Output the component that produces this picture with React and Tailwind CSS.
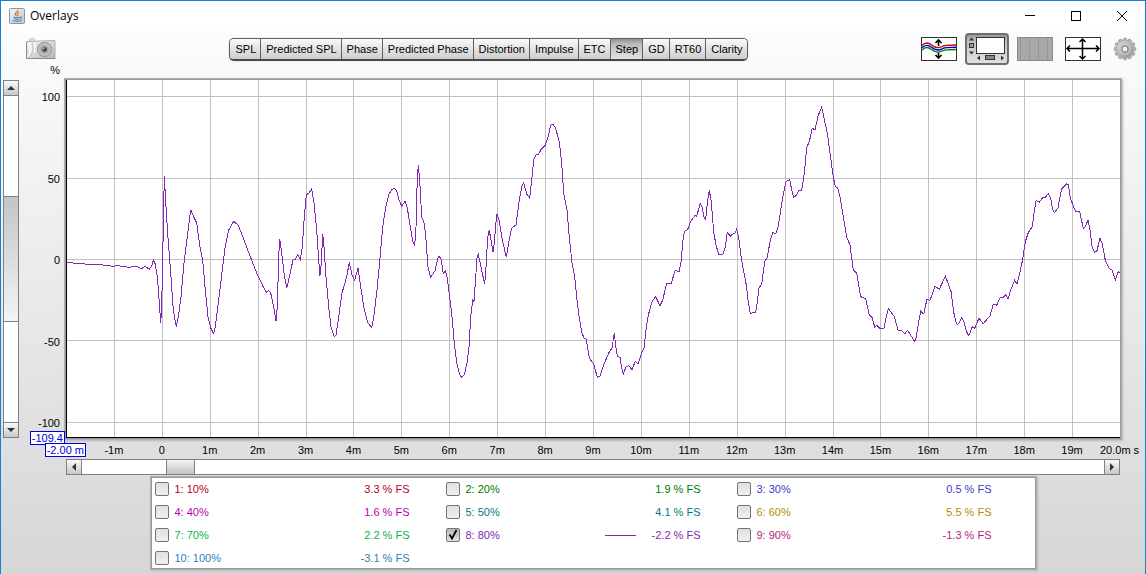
import React from "react";

const MODES = ["SPL", "Predicted SPL", "Phase", "Predicted Phase", "Distortion", "Impulse", "ETC", "Step", "GD", "RT60", "Clarity"];

const TRACES = [
  { name: "1: 10%", value: "3.3 % FS", color: "text-[#b4001e]" },
  { name: "2: 20%", value: "1.9 % FS", color: "text-[#007a00]" },
  { name: "3: 30%", value: "0.5 % FS", color: "text-[#3c3cc8]" },
  { name: "4: 40%", value: "1.6 % FS", color: "text-[#b400b4]" },
  { name: "5: 50%", value: "4.1 % FS", color: "text-[#007a80]" },
  { name: "6: 60%", value: "5.5 % FS", color: "text-[#b48c00]" },
  { name: "7: 70%", value: "2.2 % FS", color: "text-[#00b450]" },
  { name: "8: 80%", value: "-2.2 % FS", color: "text-[#8228b4]", shown: true },
  { name: "9: 90%", value: "-1.3 % FS", color: "text-[#b41e82]" },
  { name: "10: 100%", value: "-3.1 % FS", color: "text-[#2882be]" },
];

const X_TICKS = ["-1m", "0", "1m", "2m", "3m", "4m", "5m", "6m", "7m", "8m", "9m", "10m", "11m", "12m", "13m", "14m", "15m", "16m", "17m", "18m", "19m"];
const GRID_X = [114, 162, 210, 258, 306, 353, 401, 449, 497, 545, 593, 641, 689, 737, 785, 833, 880, 928, 976, 1024, 1072];
const GRID_Y = [96, 178, 259, 340, 422];

const STEP_RESPONSE =
  "67,262.5 85,264 101,264.7 113,266.3 118,265.7 129,267.3 136.7,266.3 141.7,268.7 145,266.3 149.3,269.3 151.7,266 153.3,260 155.3,264 157.7,280 159.3,303 160.7,322.5 161.7,307 163.3,227 164.3,176 166,207 168,238 170.7,273 173.3,310 176.3,326.7 178.3,317 181,297 184,263 187.3,237 189.7,217 191,210 193.3,216 196.7,223 199.7,245 202.7,260 205.3,290 208,317 210.7,328 213.7,333.7 215.3,327 218.3,303 221.7,275 225,248 228.7,230 233.7,221.3 238.3,225.3 243.3,238 250,256 256.7,273 263.3,287 266.7,292.7 268.7,290.3 270.7,293 273.3,305 276,320.7 277.3,307 278.7,257 279.7,238.7 281.7,253 284.3,275 286.7,288.3 289.3,277 293,260 295.3,259.3 297.7,254.7 300.3,259.3 302.3,247 304.3,217 306.3,195 309.3,192.7 311.7,188.7 314,203 316.7,230 318.7,260 320,275.7 321.3,263 322.7,234 324,247 326,277 328.7,307 331,327 334.3,336.7 336,335 338.7,317 342,293 346.7,277 349.3,262.3 352,275 354.7,280.3 358,268 360.7,287 364,308 367.7,322.7 371.7,327.3 373.7,318 377,290 380,258 382.7,227 385.7,207 389,194 392,189.3 394.7,188.5 396.7,190.7 399,200 401.7,206 405,201.3 407.3,208 410,225 412.7,241.7 414.7,245.3 416,227 417.3,177 418.3,165.3 419.7,180 421.7,217 424.3,223.3 426,240 428,267 430.7,277.3 435,270.7 438.3,256.7 440.7,257.3 443.3,273.3 445.3,270.7 447.3,278 449.7,297 452,317 454.3,343 456.7,363 459,372 461,377.3 464.3,375 467,363 469,347 470.7,317 472.7,300.3 474,301.7 475.3,283 477,258 478.3,254.7 480,262 482.7,275 484.7,284.3 486,267 487.7,237 489.3,230.3 491.3,242 493,252.3 494.3,243 496.7,213.7 499,220 502.3,240 506.3,257.3 508.7,243 511.7,228 516,225 519.3,200 521.7,187 523.7,182.7 526.7,194 529.7,198.3 531.7,180 533.7,160 536,154.7 538.3,154.7 541.3,149 545.3,145.3 548,137 550.7,125.3 552.7,124.3 555.3,127.3 559.3,141.7 561.7,163 563.7,193 567,210 569.3,237 572,263 574.7,277 577,300 579.3,318 581.7,332 584,338 586.3,339.3 589.3,358 593.7,364 597.3,377.3 600,376 604,364.3 608.7,353 612,348 614.3,333.3 616,348 617.5,356.7 620,357.3 621.7,368 623.3,374.3 626,366.7 628.7,365.7 632,369.7 635.3,361.3 638,364 641.7,353 644,348 646,330 648.3,315 652,301.7 655.7,296.7 660,305.7 662.7,300 666.7,283.3 671.3,283.3 675,270.7 679.3,271.3 681.3,260 682.7,242 684.3,231.7 687.7,229.3 690.7,221.3 694.7,215.7 696.7,216.3 700.3,203.3 702,207 704,217 705.7,219.3 707.3,203 709.3,190.3 711.3,202 713.7,232 716,245 718.7,254.3 723.3,254 725.7,245 727.3,232.3 730.3,236.3 732.7,234 734.7,233.7 736.7,229.3 738.7,238 741.3,258 744,273 746.3,285 748.3,302 750.3,313.3 755.3,312.3 756.7,307 759,288 761.7,284 764.7,261.7 767.3,257.3 770,242 772.7,232.3 775.7,234 778,227 780.3,213 782.7,197 786,181.7 789.7,179.7 791.7,190 793.7,197.3 795.7,196 798.7,190.7 801.7,190 803.3,180 804.3,173 806.7,148 809.7,140 812.3,128 815,130 818,116 821.7,107.3 824,118 827.3,133 830,153 833.3,177 835.3,186.7 837.7,187.7 840,197 843.3,217 846.7,237 850,245 853.3,270 856.7,273.3 860.7,296.7 865.7,298.7 869.3,315 872.3,318 874.7,327 876.7,325.3 880,328.3 884,328 886.7,315 888.3,308.7 890.7,311.7 894.3,316.7 898.3,330.7 901.7,330.7 904.7,333.7 907.7,330.3 911,335.7 914.7,341.7 916.3,336.7 918.7,321.7 920.7,311.3 923.7,314 927,299 930,300.3 935,286.3 939.3,289.3 945.3,276.3 948,283 951.3,292.3 953.3,310 955.7,321.7 957.3,324.7 959,323 961.7,317.3 964,321.7 966,330 968.3,335.7 970,333 972.3,326.7 974.7,328.3 979,318.3 983.3,323.7 990,315.7 993.3,304.3 996.7,305.3 1000,297.7 1002.7,297.7 1005.7,294.7 1008,299.3 1010.7,290 1014.7,280.3 1017,284.3 1019.3,275 1022.7,259.3 1025.3,241.7 1028.3,232.7 1032.3,226.7 1034,213 1036,200.7 1039.3,202.3 1042.7,197.7 1045.7,197 1048.3,193.3 1050.7,198 1052.3,208 1054.3,212.7 1058,207.7 1060,197 1061.7,189 1066.7,183.7 1068.3,184.7 1070.3,198 1075.3,211 1079.7,212 1083.3,228.3 1085.3,226.7 1088,220 1089.7,228 1092.3,248 1094.7,252.3 1097,250.7 1100,238.3 1102,243 1105.3,260 1108.7,268 1112,270 1115.3,280.3 1118.3,271.7 1120,272.3";

function JavaIcon() {
  return (
    <svg width="16" height="16" viewBox="0 0 16 16" aria-hidden="true">
      <defs>
        <linearGradient id="cup" x1="0" y1="0" x2="1" y2="1">
          <stop offset="0" stopColor="#f4f6f8" />
          <stop offset="1" stopColor="#b9c6d3" />
        </linearGradient>
      </defs>
      <rect x="0.5" y="0.5" width="15" height="15" rx="1" fill="url(#cup)" stroke="#7f98ae" />
      <path d="M8.800 2c.6 1.600-2.800 2.400-2.500 4.100.1.9 1 1.300 1.100 2.100M10.300 4.500c-1.400.5-2.200 1.300-1.600 2.100.4.6.2 1-.3 1.500" fill="none" stroke="#e8761a" strokeWidth="1.200" />
      <path d="M4.500 9.200c1 .6 5.400.6 6.600 0M5.200 10.900c1.400.5 3.800.5 5 0M3.500 12.500c2 1 7.500 1 9-.2M11.300 9c2.200-.4 2 1.700-.3 2.200" fill="none" stroke="#4878a0" strokeWidth="1" />
    </svg>
  );
}

function CameraIcon() {
  return (
    <svg width="31" height="22" viewBox="0 0 31 22" aria-hidden="true">
      <defs>
        <linearGradient id="camBody" x1="0" y1="0" x2="1" y2="1">
          <stop offset="0" stopColor="#fafafa" />
          <stop offset="1" stopColor="#b5b5b5" />
        </linearGradient>
        <radialGradient id="lens">
          <stop offset="0" stopColor="#30303c" />
          <stop offset="0.25" stopColor="#50505a" />
          <stop offset="0.4" stopColor="#a2a2a2" />
          <stop offset="0.75" stopColor="#c8c8c8" />
          <stop offset="1" stopColor="#858585" />
        </radialGradient>
      </defs>
      <rect x="4.500" y="0.500" width="5" height="3" rx="1" fill="#e4e4e4" stroke="#b4b4b4" strokeWidth="0.700" />
      <path d="M1.500 3.500 L30 2.500 V20.500 H1.500Z" fill="url(#camBody)" stroke="#b0b0b0" />
      <path d="M1.500 4v16.500h29" fill="none" stroke="#888" />
      <path d="M3.500 5c3 4 3 10-1 14M9.500 5.500v9" fill="none" stroke="#fff" strokeWidth="1.500" />
      <path d="M7 5c2 4 2 9-3 14" fill="none" stroke="#bbb" />
      <circle cx="19.500" cy="11.500" r="7.500" fill="url(#lens)" />
      <circle cx="18.500" cy="10.500" r="1" fill="#b8b8d8" />
    </svg>
  );
}

function TracesIcon() {
  return (
    <svg width="36" height="24" viewBox="0 0 36 24" aria-hidden="true">
      <rect x="0.500" y="0.500" width="35" height="23" fill="#fff" stroke="#333" />
      <path d="M17.500 3v18M14.500 6l3-3 3 3M14.500 18l3 3 3-3" fill="none" stroke="#000" strokeWidth="1.600" />
      <path d="M11 9.500c3 2 6 4 10 2.500" fill="none" stroke="#fff" strokeWidth="6.500" />
      <g fill="none" strokeWidth="1.400">
        <path d="M1 8.500c3-3 6.500-3 9.500-.5s6 4 10.500 1.500c2-1.500 6-1.500 14-1.500" stroke="#c80000" />
        <path d="M1 10.800c3-3 6.500-3 9.500-.5s6 4 10.500 1.500c2-1.500 6-1.500 14-1.500" stroke="#0000c8" />
        <path d="M1 13c3-3 6.500-3 9.500-.5s6 4 10.500 1.500c2-1.500 6-1.500 14-1.500" stroke="#008000" />
      </g>
    </svg>
  );
}

function ScrollbarsIcon() {
  return (
    <svg width="38" height="24" viewBox="0 0 38 24" aria-hidden="true">
      <rect x="8.500" y="0.500" width="28" height="16" fill="#fff" stroke="#333" />
      <path d="M1 3.500h5L3.500 0.500zM1 14.500h5l-2.500 3zM12 18.500v5l-3-2.500zM33 18.500v5l3-2.500z" fill="#333" />
      <rect x="1.500" y="6.500" width="4" height="4" fill="#999" stroke="#333" />
      <rect x="17.500" y="18.500" width="9" height="4" fill="#888" stroke="#333" />
    </svg>
  );
}

function BandsIcon() {
  return (
    <svg width="36" height="24" viewBox="0 0 36 24" aria-hidden="true" shapeRendering="crispEdges">
      <rect x="0.500" y="0.500" width="35" height="23" fill="#a8a8a8" stroke="#8a8a8a" />
      <path d="M3.500 1v22M12.500 1v22M21.500 1v22M30.500 1v22" stroke="#969696" />
    </svg>
  );
}

function FitIcon() {
  return (
    <svg width="36" height="24" viewBox="0 0 36 24" aria-hidden="true">
      <rect x="0.500" y="0.500" width="35" height="23" fill="#fff" stroke="#333" />
      <path d="M2 11.500h32M17.500 2v20M14.500 5l3-3 3 3M14.500 19l3 3 3-3M5 8.500l-3 3 3 3M31 8.500l3 3-3 3" fill="none" stroke="#000" strokeWidth="1.500" />
    </svg>
  );
}

function GearIcon() {
  const teeth = [0, 30, 60, 90, 120, 150, 180, 210, 240, 270, 300, 330];
  return (
    <svg width="24" height="24" viewBox="0 0 24 24" aria-hidden="true">
      <defs>
        <linearGradient id="gear" x1="0" y1="0" x2="1" y2="1">
          <stop offset="0" stopColor="#dcdcdc" />
          <stop offset="1" stopColor="#909090" />
        </linearGradient>
      </defs>
      <g fill="#b8b8b8" stroke="#8c8c8c" strokeWidth="0.700">
        {teeth.map((a) => (
          <rect key={a} x="10.300" y="1.200" width="3.400" height="4" rx="1" transform={`rotate(${a} 12 12)`} />
        ))}
      </g>
      <circle cx="12" cy="12" r="8.700" fill="url(#gear)" stroke="#a4a4a4" strokeWidth="0.600" />
      <circle cx="12" cy="12" r="5.500" fill="none" stroke="#cacaca" strokeWidth="1.200" />
      <circle cx="12" cy="12" r="3" fill="#f0f0f0" stroke="#808080" />
    </svg>
  );
}

function Arrow({ d }) {
  return (
    <svg width="8" height="8" viewBox="0 0 8 8" aria-hidden="true">
      <path d={d} fill="#333" />
    </svg>
  );
}

const arrowButton = "flex size-4 shrink-0 items-center justify-center border border-[#808080] bg-linear-to-b from-[#fafafa] to-[#c8c8c8]";
const panelFrame = "shadow-[0_0_0_1px_#999,0_0_0_2px_#b0b0b0,1px_1px_2px_2px_#b8b8b8]";

function TitleBar() {
  return (
    <header className="flex h-[30px] items-center bg-white pl-2">
      <JavaIcon />
      <h1 className="ml-[5px] flex-1 font-['Open_Sans','Noto_Sans',sans-serif] text-[12px] text-black">Overlays</h1>
      <button aria-label="Minimize" className="flex h-full w-[46px] items-center justify-center">
        <svg width="10" height="10" viewBox="0 0 10 10"><path d="M0 4.500h10" stroke="#000" /></svg>
      </button>
      <button aria-label="Maximize" className="flex h-full w-[46px] items-center justify-center">
        <svg width="10" height="10" viewBox="0 0 10 10"><rect x="0.500" y="0.500" width="9" height="9" fill="none" stroke="#000" /></svg>
      </button>
      <button aria-label="Close" className="flex h-full w-[46px] items-center justify-center">
        <svg width="10" height="10" viewBox="0 0 10 10"><path d="M0 0l10 10M10 0L0 10" stroke="#000" /></svg>
      </button>
    </header>
  );
}

function Toolbar() {
  return (
    <div className="flex h-9 items-center pr-2 pl-6">
      <button aria-label="Capture image"><CameraIcon /></button>
      <div className="flex flex-1 justify-center">
        <div role="group" aria-label="Graph type" className="flex h-[23px] overflow-hidden rounded-[5px] border border-b-2 border-[#606060] border-b-[#484848] shadow-[0_0_1px_#808080]">
          {MODES.map((mode) => (
            <button
              key={mode}
              aria-pressed={mode === "Step"}
              className={
                mode === "Step"
                  ? "border-r border-[#606060] bg-linear-to-b from-[#909090] via-[#bcbcbc] via-25% to-[#e4e4e4] pt-px pr-1 pl-[5px] whitespace-nowrap last:border-r-0"
                  : "border-r border-[#606060] bg-linear-to-b from-[#fafafa] to-[#cdcdcd] pt-px pr-1 pl-[5px] whitespace-nowrap last:border-r-0"
              }
            >
              {mode}
            </button>
          ))}
        </div>
      </div>
      <div className="flex items-center gap-2">
        <button aria-label="Separate traces"><TracesIcon /></button>
        <button aria-label="Scrollbars" aria-pressed="true" className="flex h-8 w-11 items-center justify-center rounded-[4px] border-2 border-[#707070] bg-linear-to-b from-[#989898] via-[#c4c4c4] via-25% to-[#e0e0e0]">
          <ScrollbarsIcon />
        </button>
        <button aria-label="Frequency bands"><BandsIcon /></button>
        <button aria-label="Fit to data" className="ml-1"><FitIcon /></button>
        <button aria-label="Graph controls" className="ml-1"><GearIcon /></button>
      </div>
    </div>
  );
}

function Chart() {
  return (
    <svg className="absolute inset-0 size-full" viewBox="67 80 1053 357" preserveAspectRatio="none" role="img" aria-label="Step response, percent against time" shapeRendering="crispEdges">
      <g stroke="#c0c0c0" strokeWidth="1">
        {GRID_X.map((x) => <line key={x} x1={x + 0.5} x2={x + 0.5} y1="80" y2="437" vectorEffect="non-scaling-stroke" />)}
        {GRID_Y.map((y) => <line key={y} x1="67" x2="1120" y1={y + 0.5} y2={y + 0.5} vectorEffect="non-scaling-stroke" />)}
      </g>
      <polyline points={STEP_RESPONSE} fill="none" stroke="#8228b4" strokeWidth="1" vectorEffect="non-scaling-stroke" />
    </svg>
  );
}

function Legend() {
  return (
    <div className="mr-[25px] ml-[65px] flex justify-center">
      <section aria-label="Traces" className={`grid h-[90px] w-full max-w-[883px] grid-cols-3 content-start bg-white pr-[7px] pl-[3px] ${panelFrame}`}>
        {TRACES.map((t) => (
          <label key={t.name} className={`flex h-[23px] items-center pr-9 ${t.color}`}>
            <span className="relative mr-[6px] mb-[2px] flex">
              <input
                type="checkbox"
                defaultChecked={!!t.shown}
                className="peer size-[14px] appearance-none rounded-[2px] border border-[#70747c] bg-linear-to-b from-[#e0e0e0] to-[#f0f0f0] checked:from-[#b8b8b8] checked:to-[#e0e0e0]"
              />
              <svg className="pointer-events-none absolute top-0 left-0 hidden peer-checked:block" width="14" height="14" viewBox="0 0 14 14" aria-hidden="true">
                <path d="M3.500 6.500L6 10.500L10.500 2" fill="none" stroke="#000" strokeWidth="1.800" />
              </svg>
            </span>
            <span className="flex-1">{t.name}</span>
            {t.shown && <span className="mr-4 h-px w-[31px] bg-[#8228b4]" />}
            <span>{t.value}</span>
          </label>
        ))}
      </section>
    </div>
  );
}

export default function App() {
  return (
    <div className="flex min-h-screen flex-col border border-[#1a7fd4] bg-white font-['Liberation_Sans',Arial,sans-serif] text-[11px] text-black">
      <TitleBar />
      <main className="flex flex-1 flex-col bg-linear-to-b from-[#fcfcfc] to-[#d6d6d6] pb-[6px]">
        <Toolbar />
        <div className="h-[13px] w-[59px] text-right leading-[6px]">%</div>

        <div className="flex min-h-[358px] flex-1 pr-[25px]">
          <div role="scrollbar" aria-label="Vertical range" aria-orientation="vertical" aria-controls="plot" aria-valuenow="50" className="ml-[2px] flex w-4 flex-col border-x border-[#808080] bg-white">
            <button aria-label="Scroll up" className={`-mx-px ${arrowButton}`}><Arrow d="M0 6h8L4 2z" /></button>
            <div className="flex-[101]" />
            <div className="flex-[125] border-y border-[#808080] bg-linear-to-b from-[#c4c4c4] to-[#f4f4f4]" />
            <div className="flex-[101]" />
            <button aria-label="Scroll down" className={`-mx-px ${arrowButton}`}><Arrow d="M0 2h8L4 6z" /></button>
          </div>
          <div className="flex flex-1">
            <div className="relative flex w-[47px] flex-col justify-between pt-[10px] pr-[6px] pb-2 text-right leading-[14px]">
              <span>100</span>
              <span>50</span>
              <span>0</span>
              <span>-50</span>
              <span>-100</span>
              <span className="absolute right-[1px] -bottom-[7px] z-10 border border-[#0000e0] bg-white px-px leading-[12px] whitespace-nowrap text-[#0000e0]">-109.4</span>
            </div>
            <div id="plot" className={`relative flex-1 border-b border-l border-black bg-white ${panelFrame}`}>
              <Chart />
            </div>
          </div>
        </div>

        <div className="relative mt-[5px] mr-[25px] ml-[65px] flex leading-[14px]">
          <span className="absolute top-0 right-full z-10 -mr-5 border border-[#0000e0] bg-white px-px leading-[12px] whitespace-nowrap text-[#0000e0]">-2.00 m</span>
          <span className="flex-1" />
          {X_TICKS.map((t) => (
            <span key={t} className="w-0 flex-[2] text-center">{t}</span>
          ))}
          <span className="w-0 flex-1 indent-1 whitespace-nowrap">20.0m s</span>
        </div>

        <div role="scrollbar" aria-label="Time range" aria-orientation="horizontal" aria-controls="plot" aria-valuenow="10" className="mt-[2px] mr-[25px] mb-[3px] ml-[65px] flex h-4 border-y border-[#808080] bg-white">
          <button aria-label="Scroll left" className={`-my-px ${arrowButton}`}><Arrow d="M6 0v8L2 4z" /></button>
          <div className="flex-[84]" />
          <div className="flex-[27] border-x border-[#808080] bg-linear-to-b from-[#f4f4f4] to-[#c4c4c4]" />
          <div className="flex-[909]" />
          <button aria-label="Scroll right" className={`-my-px ${arrowButton}`}><Arrow d="M2 0v8L6 4z" /></button>
        </div>

        <Legend />
      </main>
    </div>
  );
}
